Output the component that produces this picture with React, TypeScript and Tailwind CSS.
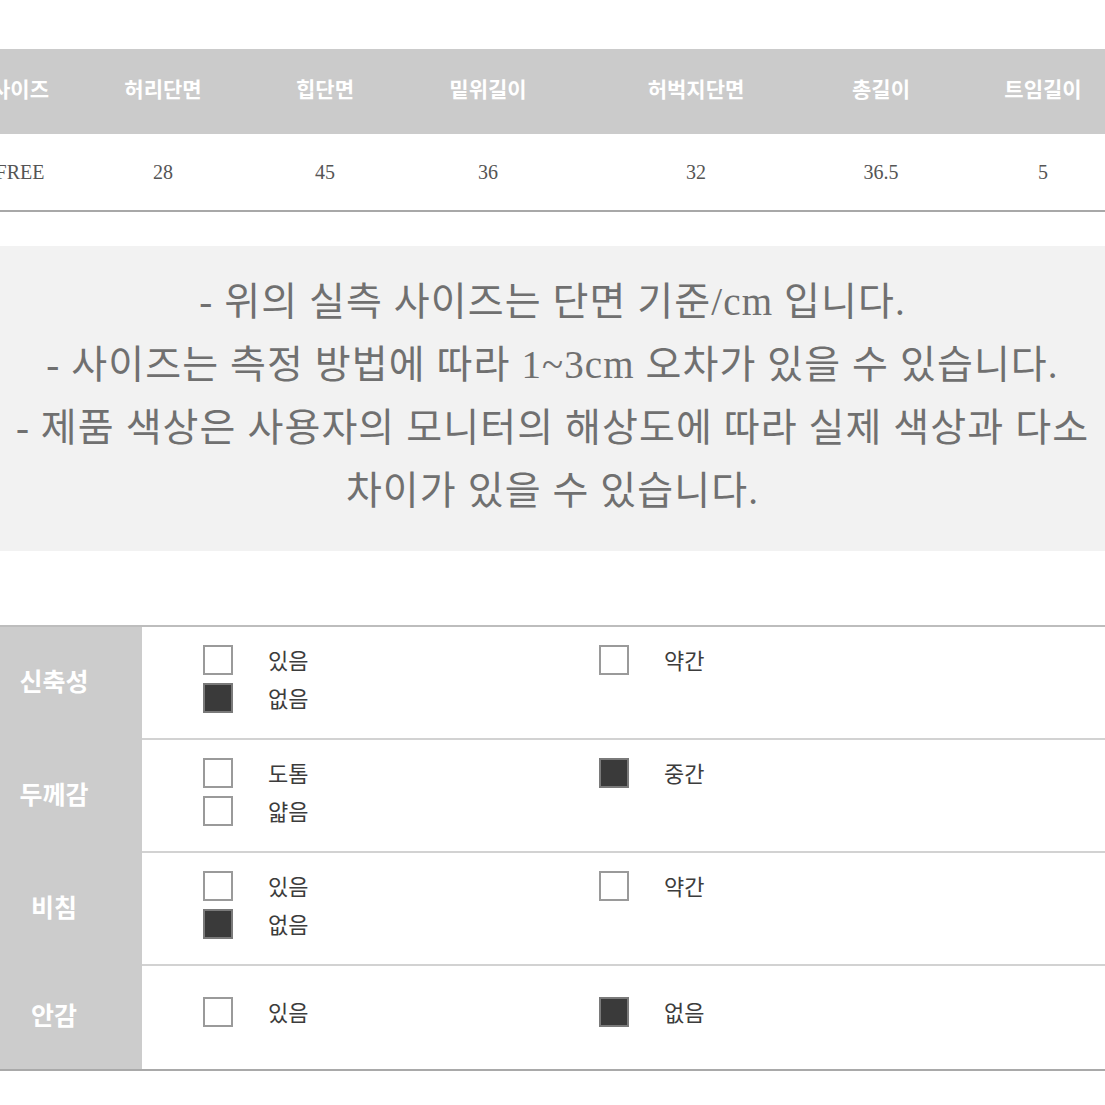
import React from 'react';

const sizeHeaders = ['사이즈', '허리단면', '힙단면', '밑위길이', '허벅지단면', '총길이', '트임길이'];
const sizeValues = ['FREE', '28', '45', '36', '32', '36.5', '5'];

type Opt = { label: string; checked: boolean };
type Attr = { name: string; left: Opt[]; right: Opt[] };

const attrs: Attr[] = [
    {
        name: '신축성',
        left: [{ label: '있음', checked: false }, { label: '없음', checked: true }],
        right: [{ label: '약간', checked: false }],
    },
    {
        name: '두께감',
        left: [{ label: '도톰', checked: false }, { label: '얇음', checked: false }],
        right: [{ label: '중간', checked: true }],
    },
    {
        name: '비침',
        left: [{ label: '있음', checked: false }, { label: '없음', checked: true }],
        right: [{ label: '약간', checked: false }],
    },
    {
        name: '안감',
        left: [{ label: '있음', checked: false }],
        right: [{ label: '없음', checked: true }],
    },
];

const kr = "font-['Noto_Sans_CJK_KR','Noto_Sans',sans-serif]";

const Option: React.FC<{ opt: Opt }> = ({ opt }) => (
    <div className="flex items-center gap-[35px] h-[30px]">
        <div
            className={
                opt.checked
                    ? 'w-[30px] h-[30px] border-2 border-[#7a7a7a] bg-[#3a3a3a]'
                    : 'w-[30px] h-[30px] border-2 border-[#9a9a9a] bg-white'
            }
        />
        <span className={`${kr} text-[22px] leading-none text-[#3c3c3c] pb-[2px]`}>{opt.label}</span>
    </div>
);

export default function App() {
    return (
        <div className="w-[1105px] h-[1105px] bg-white overflow-hidden pt-[49px]">
            {/* Size table */}
            <div className="-ml-[41px] w-[1186px]">
                <div className="grid grid-cols-[122px_164px_160px_166px_250px_120px_204px] h-[85px] bg-[#cbcbcb] items-center pb-[6px]">
                    {sizeHeaders.map((h) => (
                        <div key={h} className={`${kr} text-center text-[21px] font-bold text-white`}>
                            {h}
                        </div>
                    ))}
                </div>
                <div className="grid grid-cols-[122px_164px_160px_166px_250px_120px_204px] h-[78px] items-center border-b-2 border-[#a8a8a8]">
                    {sizeValues.map((v, i) => (
                        <div key={i} className="text-center text-[20px] text-[#555] font-['Liberation_Serif',serif]">
                            {v}
                        </div>
                    ))}
                </div>
            </div>

            {/* Notes */}
            <div className="mt-[34px] h-[305px] bg-[#f2f2f2] pt-[24px] text-center text-[39px] tracking-[1.1px] leading-[63px] text-[#707070] whitespace-nowrap font-['Liberation_Serif','Noto_Sans_CJK_KR',serif]">
                <div>- 위의 실측 사이즈는 단면 기준/cm 입니다.</div>
                <div>- 사이즈는 측정 방법에 따라 1~3cm 오차가 있을 수 있습니다.</div>
                <div>- 제품 색상은 사용자의 모니터의 해상도에 따라 실제 색상과 다소</div>
                <div>차이가 있을 수 있습니다.</div>
            </div>

            {/* Attribute table */}
            <div className="mt-[74px] border-t-2 border-[#bdbdbd] border-b-2 border-b-[#a9a9a9]">
                {attrs.map((a, i) => {
                    const last = i === attrs.length - 1;
                    return (
                        <div key={a.name} className={last ? 'flex h-[103px]' : 'flex h-[113px]'}>
                            <div className={`${kr} w-[142px] shrink-0 bg-[#cccccc] flex items-center justify-center pr-[34px] pb-[6px] text-[25px] font-bold text-white`}>
                                {a.name}
                            </div>
                            <div
                                className={
                                    last
                                        ? 'flex-1 grid grid-cols-[396px_1fr] pl-[61px] pt-[31px]'
                                        : 'flex-1 grid grid-cols-[396px_1fr] pl-[61px] pt-[18px] border-b-2 border-[#d2d2d2]'
                                }
                            >
                                <div className="flex flex-col gap-[8px]">
                                    {a.left.map((o) => (
                                        <Option key={o.label} opt={o} />
                                    ))}
                                </div>
                                <div className="flex flex-col gap-[8px]">
                                    {a.right.map((o) => (
                                        <Option key={o.label} opt={o} />
                                    ))}
                                </div>
                            </div>
                        </div>
                    );
                })}
            </div>
        </div>
    );
}
